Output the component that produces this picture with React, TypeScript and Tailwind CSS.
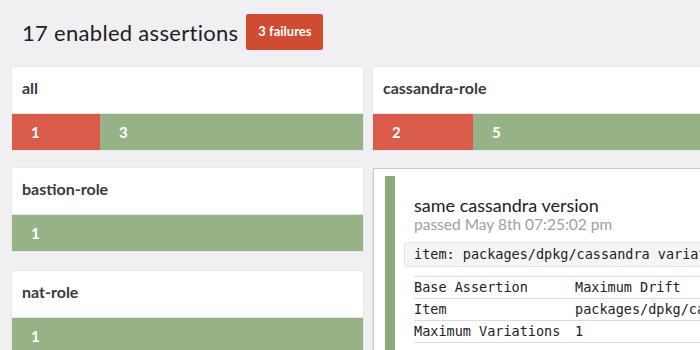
import React from "react";

type Group = { name: string; failed: number; passed: number };

function GroupCard({ group, failWidth }: { group: Group; failWidth?: string }) {
    return (
        <div className="bg-white shadow-[0_0_1px_rgba(0,0,0,0.15)]">
            <div className="h-[46px] flex items-center pl-[10px] pb-[5px] text-[16px] font-bold text-[#3a3a3a]">
                {group.name}
            </div>
            <div className="flex h-[37px] border-t border-[#e6e6e6] text-white font-bold text-[15px]">
                {group.failed > 0 && (
                    <div className={`${failWidth} bg-[#d95c4a] flex items-center pl-[19px]`}>{group.failed}</div>
                )}
                <div className="flex-1 bg-[#97b286] flex items-center pl-[19px]">{group.passed}</div>
            </div>
        </div>
    );
}

const rows = [
    ["Base Assertion", "Maximum Drift"],
    ["Item", "packages/dpkg/cassandra"],
    ["Maximum Variations", "1"],
];

const mono = { fontFamily: "'DejaVu Sans Mono', monospace" };

export default function App() {
    return (
        <div
            className="w-[700px] h-[350px] overflow-hidden bg-[#f0f0f2] text-[#222]"
            style={{ fontFamily: "Lato, 'Open Sans', sans-serif" }}
        >
            <div className="flex items-center h-[64px] pl-[22px] gap-[8px]">
                <h1 className="text-[22px] tracking-[0.3px] text-[#1e1e1e]">17 enabled assertions</h1>
                <span className="bg-[#cf4b31] text-white font-bold text-[13px] h-[36px] w-[77px] justify-center flex items-center rounded-[2px]">
                    3 failures
                </span>
            </div>
            <div className="flex gap-[10px] pl-[12px] w-[740px] mt-[3px]">
                <div className="w-[351px] flex flex-col gap-[18px]">
                    <GroupCard group={{ name: "all", failed: 1, passed: 3 }} failWidth="w-[88px]" />
                    <GroupCard group={{ name: "bastion-role", failed: 0, passed: 1 }} />
                    <div className="mt-[2px]">
                        <GroupCard group={{ name: "nat-role", failed: 0, passed: 1 }} />
                    </div>
                </div>
                <div className="w-[351px] flex flex-col gap-[18px]">
                    <GroupCard group={{ name: "cassandra-role", failed: 2, passed: 5 }} failWidth="w-[100px]" />
                    <div className="bg-white border border-[#c9c9c9] shadow-[0_1px_2px_rgba(0,0,0,0.12)] pt-[7px] pl-[11px] h-[200px]">
                        <div className="flex">
                            <div className="w-[10px] shrink-0 self-stretch bg-[#8caa79]" />
                            <div className="pl-[19px] pt-[19px] flex-1 min-w-0">
                                <div className="text-[18px] leading-[20px] text-[#1e1e1e]">same cassandra version</div>
                                <div className="text-[15.5px] leading-[18px] text-[#a0a0a0]">passed May 8th 07:25:02 pm</div>
                                <div
                                    className="mt-[9px] -ml-[10px] bg-[#f5f5f5] border border-[#e4e4e4] rounded-[3px] h-[25px] flex items-center pl-[9px] text-[13.5px] whitespace-nowrap overflow-hidden text-[#222]"
                                    style={mono}
                                >
                                    item: packages/dpkg/cassandra variations: 1
                                </div>
                                <table className="mt-[9px] w-[400px] table-fixed text-[13.5px] text-[#222] border-collapse" style={mono}>
                                    <tbody>
                                        {rows.map((r) => (
                                            <tr key={r[0]} className="border-t border-[#dcdcdc] h-[22px]">
                                                <td className="w-[161px] p-0 whitespace-nowrap">{r[0]}</td>
                                                <td className="p-0 whitespace-nowrap">{r[1]}</td>
                                            </tr>
                                        ))}
                                        <tr className="border-t border-[#dcdcdc] h-[10px]">
                                            <td />
                                            <td />
                                        </tr>
                                    </tbody>
                                </table>
                            </div>
                        </div>
                    </div>
                </div>
            </div>
        </div>
    );
}
